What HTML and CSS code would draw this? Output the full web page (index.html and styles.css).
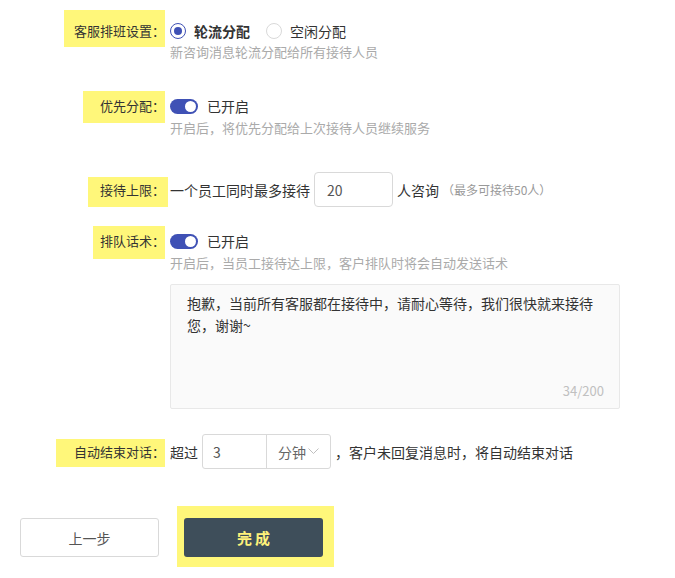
FILE: index.html
```html
<!DOCTYPE html>
<html lang="zh-CN">
<head>
    <meta charset="UTF-8">
    <meta name="viewport" content="width=device-width, initial-scale=1.0">
    <title>接待设置</title>
    <link rel="stylesheet" href="styles.css">
</head>
<body>

    <div class="form">
        <!-- 客服排班 -->
        <div class="row row-mode">
            <div class="label"><span class="hl hl-mode">客服排班设置：</span></div>
            <div class="field">
                <div class="line">
                    <label class="radio checked"><span class="dot"></span>轮流分配</label>
                    <label class="radio"><span class="dot"></span>空闲分配</label>
                </div>
                <div class="hint">新咨询消息轮流分配给所有接待人员</div>
            </div>
        </div>

        <!-- 优先分配 -->
        <div class="row row-priority">
            <div class="label"><span class="hl hl-priority">优先分配：</span></div>
            <div class="field">
                <div class="line">
                    <span class="switch on"><span class="knob"></span></span>
                    <span class="switch-text">已开启</span>
                </div>
                <div class="hint hint-tight">开启后，将优先分配给上次接待人员继续服务</div>
            </div>
        </div>

        <!-- 接待上限 -->
        <div class="row row-limit">
            <div class="label"><span class="hl hl-limit">接待上限：</span></div>
            <div class="field">
                <div class="line line-tall">
                    <span>一个员工同时最多接待</span>
                    <input class="num-input" type="text" value="20">
                    <span class="after-input">人咨询</span>
                    <span class="note">（最多可接待50人）</span>
                </div>
            </div>
        </div>

        <!-- 排队话术 -->
        <div class="row row-queue">
            <div class="label"><span class="hl hl-queue">排队话术：</span></div>
            <div class="field">
                <div class="line">
                    <span class="switch on"><span class="knob"></span></span>
                    <span class="switch-text">已开启</span>
                </div>
                <div class="hint hint-tight">开启后，当员工接待达上限，客户排队时将会自动发送话术</div>
                <div class="text-box">
                    <textarea class="message" maxlength="200">抱歉，当前所有客服都在接待中，请耐心等待，我们很快就来接待您，谢谢~</textarea>
                    <span class="counter">34/200</span>
                </div>
            </div>
        </div>

        <!-- 自动结束 -->
        <div class="row row-end">
            <div class="label"><span class="hl hl-end">自动结束对话：</span></div>
            <div class="field">
                <div class="line line-tall">
                    <span>超过</span>
                    <div class="input-group">
                        <input class="group-input" type="text" value="3">
                        <div class="unit-select">
                            分钟
                            <svg class="chevron" width="11" height="7" viewBox="0 0 11 7">
                                <polyline points="0.5,0.5 5.5,5.5 10.5,0.5" fill="none" stroke="#bfbfbf" stroke-width="1"/>
                            </svg>
                        </div>
                    </div>
                    <span class="after-group">，客户未回复消息时，将自动结束对话</span>
                </div>
            </div>
        </div>

        <div class="actions">
            <button class="btn btn-prev">上一步</button>
            <span class="hl-btn"><button class="btn btn-done">完成</button></span>
        </div>
    </div>

</body>
</html>
```

FILE: styles.css
```css
body, html {
    margin: 0;
    padding: 0;
    background: #fff;
    font-family: "Noto Sans CJK SC", "Noto Sans", sans-serif;
    color: #333;
}

.form {
    padding-top: 20px;
}

.row {
    display: flex;
    align-items: flex-start;
}

/* spacing between rows */
.row-priority { margin-top: 33px; }
.row-limit { margin-top: 34px; }
.row-queue { margin-top: 23px; }
.row-end { margin-top: 25px; }

.label {
    width: 165px;
    margin-right: 5px;
    display: flex;
    justify-content: flex-end;
    flex-shrink: 0;
}

/* yellow marker behind the labels */
.hl {
    display: block;
    background: #fff77a;
    font-size: 13px;
    line-height: 22px;
    color: #333;
    white-space: nowrap;
}

.hl-mode { margin-top: -10px; padding: 10px 0 5px 10px; }
.hl-priority { margin-top: -4px; padding: 4px 0 6px 17px; }
.hl-limit { margin-top: 5px; padding: 2px 3px 6px 12px; margin-right: -3px; }
.hl-queue { margin-top: -4px; padding: 4px 0 7px 7px; }
.hl-end { margin-top: 5px; padding: 2px 0 4px 18px; }

.field {
    flex: 1;
}

.line {
    display: flex;
    align-items: center;
    height: 22px;
    font-size: 14px;
    line-height: 22px;
    white-space: nowrap;
}

.line-tall {
    height: 35px;
}

.hint {
    font-size: 13px;
    line-height: 20px;
    color: #aaa;
}

.hint-tight {
    margin-top: 1px;
}

/* radios */
.radio {
    display: flex;
    align-items: center;
    margin-right: 16px;
    color: #333;
}

.radio .dot {
    width: 14px;
    height: 14px;
    border: 1px solid #d9d9d9;
    border-radius: 50%;
    margin-right: 8px;
    position: relative;
    box-sizing: content-box;
}

.radio.checked {
    font-weight: bold;
}

.radio.checked .dot {
    border-color: #3f51b5;
}

.radio.checked .dot::after {
    content: "";
    position: absolute;
    left: 3px;
    top: 3px;
    width: 8px;
    height: 8px;
    border-radius: 50%;
    background: #3f51b5;
}

/* switch */
.switch {
    width: 28px;
    height: 15px;
    border-radius: 8px;
    background: #ccc;
    display: flex;
    align-items: center;
    box-sizing: border-box;
    padding: 0 2px;
}

.switch.on {
    background: #3f51b5;
    justify-content: flex-end;
}

.switch .knob {
    width: 11px;
    height: 11px;
    border-radius: 50%;
    background: #fff;
}

.switch-text {
    margin-left: 9px;
}

/* inputs */
.num-input {
    width: 79px;
    height: 35px;
    box-sizing: border-box;
    margin: 0 4px;
    padding: 0 12px;
    border: 1px solid #d9d9d9;
    border-radius: 4px;
    font-family: inherit;
    font-size: 14px;
    color: #555;
    outline: none;
}

.note {
    font-size: 12px;
    color: #999;
    margin-left: 3px;
}

.text-box {
    position: relative;
    width: 450px;
    height: 125px;
    margin-top: 11px;
}

.message {
    width: 100%;
    height: 100%;
    box-sizing: border-box;
    padding: 7px 16px;
    border: 1px solid #e8e8e8;
    border-radius: 2px;
    background: #fafafa;
    font-family: inherit;
    font-size: 14px;
    line-height: 22px;
    color: #333;
    resize: none;
    outline: none;
    display: block;
}

.counter {
    position: absolute;
    right: 16px;
    bottom: 8px;
    font-size: 13px;
    line-height: 20px;
    color: #c0c0c0;
}

.input-group {
    display: flex;
    height: 35px;
    margin-left: 4px;
    border: 1px solid #d9d9d9;
    border-radius: 3px;
    box-sizing: border-box;
}

.group-input {
    width: 64px;
    box-sizing: border-box;
    border: none;
    border-right: 1px solid #d9d9d9;
    padding: 0 10px;
    font-family: inherit;
    font-size: 14px;
    color: #555;
    background: transparent;
    outline: none;
}

.unit-select {
    width: 63px;
    display: flex;
    align-items: center;
    padding-left: 11px;
    box-sizing: border-box;
    color: #666;
}

.chevron {
    margin-left: 2px;
}

.after-group {
    margin-left: 4px;
}

/* buttons */
.actions {
    display: flex;
    align-items: flex-start;
    margin-top: 37px;
    padding-left: 20px;
}

.btn {
    width: 139px;
    height: 39px;
    border-radius: 3px;
    font-family: inherit;
    font-size: 14px;
    cursor: pointer;
}

.btn-prev {
    margin-top: 12px;
    background: #fff;
    border: 1px solid #d9d9d9;
    color: #555;
}

.hl-btn {
    display: block;
    margin-left: 18px;
    padding: 12px 11px 10px 7px;
    background: #fff77a;
}

.btn-done {
    display: block;
    background: #3e4e5a;
    border: none;
    color: #fff27a;
    font-size: 15px;
    font-weight: bold;
    letter-spacing: 3px;
    text-indent: 3px;
}
```
